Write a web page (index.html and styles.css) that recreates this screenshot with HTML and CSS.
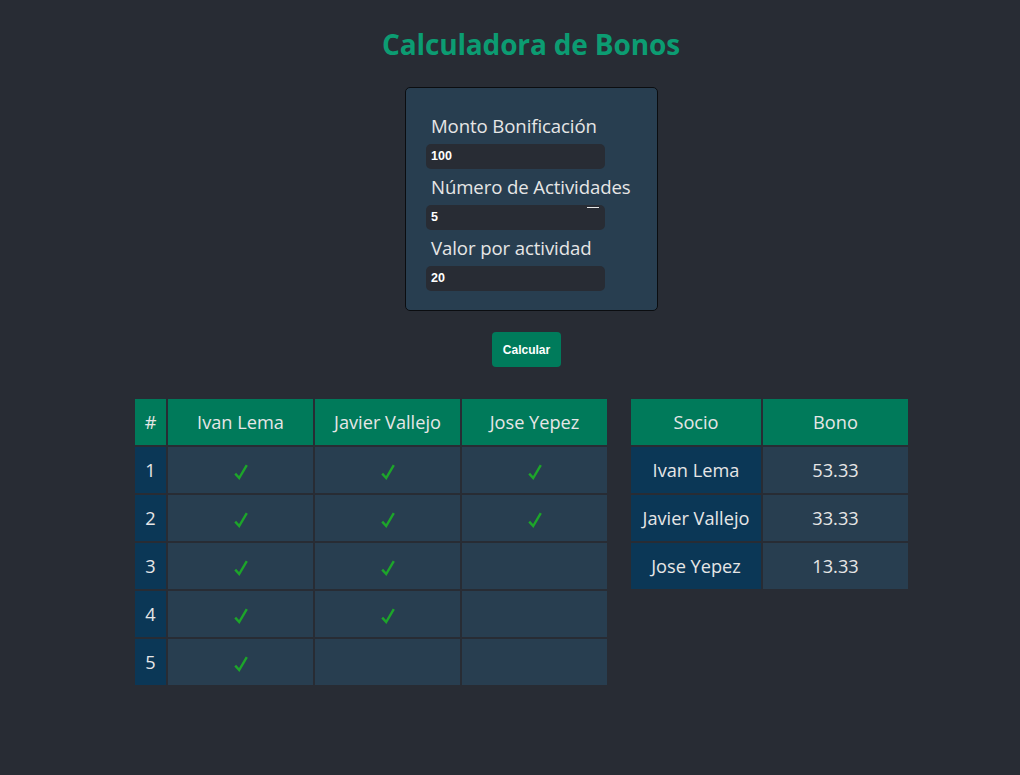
FILE: index.html
```html
<!DOCTYPE html>
<html lang="es">
<head>
<meta charset="utf-8">
<title>Calculadora de Bonos</title>
<link rel="stylesheet" href="styles.css">
</head>
<body>
<div class="app">
  <h1 class="title">Calculadora de Bonos</h1>
  <div class="card-wrap">
    <div class="card">
      <label class="label">Monto Bonificación</label>
      <div class="input">100</div>
      <label class="label">Número de Actividades</label>
      <div class="input">5<span class="spin"></span></div>
      <label class="label">Valor por actividad</label>
      <div class="input">20</div>
    </div>
  </div>
  <div class="btn-wrap"><button class="btn">Calcular</button></div>
  <div class="tables">
    <table class="grid">
      <thead>
        <tr><th class="num">#</th><th class="w">Ivan Lema</th><th class="w">Javier Vallejo</th><th class="w">Jose Yepez</th></tr>
      </thead>
      <tbody>
        <tr><td class="idx">1</td><td><svg class="ck" viewBox="0 0 14 16"><path d="M1.2 9.6 L5.2 14 L12.8 1.2"/></svg></td><td><svg class="ck" viewBox="0 0 14 16"><path d="M1.2 9.6 L5.2 14 L12.8 1.2"/></svg></td><td><svg class="ck" viewBox="0 0 14 16"><path d="M1.2 9.6 L5.2 14 L12.8 1.2"/></svg></td></tr>
        <tr><td class="idx">2</td><td><svg class="ck" viewBox="0 0 14 16"><path d="M1.2 9.6 L5.2 14 L12.8 1.2"/></svg></td><td><svg class="ck" viewBox="0 0 14 16"><path d="M1.2 9.6 L5.2 14 L12.8 1.2"/></svg></td><td><svg class="ck" viewBox="0 0 14 16"><path d="M1.2 9.6 L5.2 14 L12.8 1.2"/></svg></td></tr>
        <tr><td class="idx">3</td><td><svg class="ck" viewBox="0 0 14 16"><path d="M1.2 9.6 L5.2 14 L12.8 1.2"/></svg></td><td><svg class="ck" viewBox="0 0 14 16"><path d="M1.2 9.6 L5.2 14 L12.8 1.2"/></svg></td><td></td></tr>
        <tr><td class="idx">4</td><td><svg class="ck" viewBox="0 0 14 16"><path d="M1.2 9.6 L5.2 14 L12.8 1.2"/></svg></td><td><svg class="ck" viewBox="0 0 14 16"><path d="M1.2 9.6 L5.2 14 L12.8 1.2"/></svg></td><td></td></tr>
        <tr><td class="idx">5</td><td><svg class="ck" viewBox="0 0 14 16"><path d="M1.2 9.6 L5.2 14 L12.8 1.2"/></svg></td><td></td><td></td></tr>
      </tbody>
    </table>
    <table class="grid res">
      <thead>
        <tr><th class="s">Socio</th><th class="b">Bono</th></tr>
      </thead>
      <tbody>
        <tr><td class="idx">Ivan Lema</td><td>53.33</td></tr>
        <tr><td class="idx">Javier Vallejo</td><td>33.33</td></tr>
        <tr><td class="idx">Jose Yepez</td><td>13.33</td></tr>
      </tbody>
    </table>
  </div>
</div>
</body>
</html>
```
FILE: styles.css
```css
html, body {
  margin: 0;
  padding: 0;
  background: #282c34;
}
body {
  font-family: "Open Sans", "Noto Sans", sans-serif;
  color: #e4e4e4;
  width: 1020px;
  height: 775px;
  overflow: hidden;
}
.app {
  display: flex;
  flex-direction: column;
}
.title {
  margin: 25px 0 0 0;
  padding-left: 42px;
  text-align: center;
  font-size: 28px;
  line-height: 39px;
  font-weight: 700;
  color: #0c9c72;
  letter-spacing: -0.15px;
}
.card-wrap {
  display: flex;
  justify-content: center;
  padding-left: 43px;
  margin-top: 23px;
}
.card {
  width: 253px;
  height: 224px;
  box-sizing: border-box;
  background: #283e50;
  border: 1px solid #0b0d10;
  border-radius: 5px;
  display: flex;
  flex-direction: column;
  align-items: flex-start;
  padding-top: 26px;
}
.label {
  display: block;
  margin-left: 25px;
  font-size: 18.6px;
  line-height: 24px;
  color: #e6e6e6;
  margin-bottom: 6px;
  letter-spacing: -0.1px;
  white-space: nowrap;
}
.input {
  position: relative;
  margin-left: 20px;
  width: 179px;
  height: 25px;
  box-sizing: border-box;
  background: #282c34;
  border-radius: 5px;
  padding-left: 5px;
  font-family: "Liberation Sans", Arial, sans-serif;
  font-weight: 700;
  font-size: 12.5px;
  line-height: 25px;
  color: #ffffff;
  margin-bottom: 6px;
}
.spin {
  position: absolute;
  right: 6px;
  top: 2px;
  width: 12px;
  height: 1px;
  background: #e8e8e8;
}
.btn-wrap {
  display: flex;
  justify-content: center;
  padding-left: 33px;
  margin-top: 21px;
}
.btn {
  width: 69px;
  height: 35px;
  border: none;
  border-radius: 4px;
  background: #007b5b;
  color: #ffffff;
  font-family: "Liberation Sans", Arial, sans-serif;
  font-weight: 700;
  font-size: 12px;
  padding: 0;
}
.tables {
  display: flex;
  align-items: flex-start;
  margin-top: 30px;
  margin-left: 133px;
  gap: 20px;
}
.grid {
  border-collapse: separate;
  border-spacing: 2px;
}
.grid th, .grid td {
  height: 46px;
  padding: 0;
  text-align: center;
  vertical-align: middle;
  font-size: 18.2px;
  font-weight: 400;
  color: #e6e6e6;
  box-sizing: border-box;
  white-space: nowrap;
}
.grid th {
  background: #007a5a;
}
.grid td {
  background: #283e50;
}
.grid td.idx {
  background: #0b3756;
}
.num { width: 31px; }
.w { width: 145px; }
.s { width: 130px; }
.b { width: 145px; }
.ck {
  display: block;
  margin: 3px auto 0;
  width: 14px;
  height: 16px;
  fill: none;
  stroke: #1da52a;
  stroke-width: 2.4;
  stroke-linecap: butt;
  stroke-linejoin: miter;
}
```
